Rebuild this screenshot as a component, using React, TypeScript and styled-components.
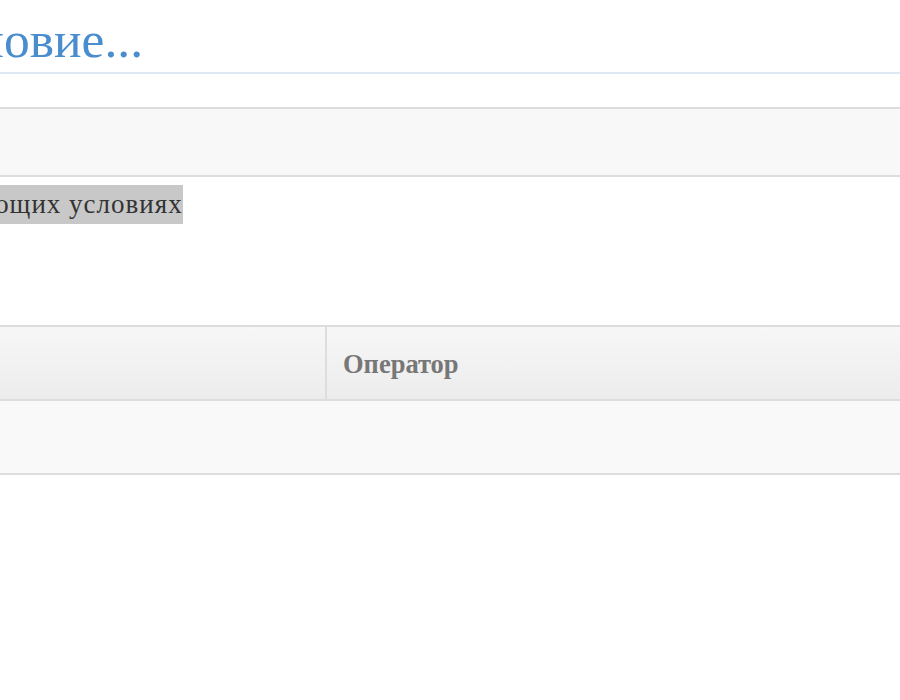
import React from "react";
import styled, { createGlobalStyle } from "styled-components";

const Global = createGlobalStyle`
  html, body {
    margin: 0;
    padding: 0;
    background: #ffffff;
    overflow: hidden;
  }
  body {
    font-family: "Liberation Serif", "Times New Roman", serif;
    color: #333333;
  }
`;

const Page = styled.div`
  width: 1500px;
  margin-left: -340px;
  padding-top: 12px;
`;

const Heading = styled.h1`
  margin: 0;
  padding: 2px 0 6px 49px;
  font-size: 51.5px;
  font-weight: normal;
  line-height: 52px;
  color: #4a8dce;
  border-bottom: 2px solid #dce8f3;
`;

const Panel = styled.div`
  margin-top: 33px;
  height: 66px;
  background: #f8f8f8;
  border-top: 2px solid #dddddd;
  border-bottom: 2px solid #dddddd;
`;

const Intro = styled.div`
  margin-top: 8px;
  padding-left: 59px;
`;

const Marked = styled.span`
  display: inline-block;
  background: #c8c8c8;
  font-size: 27px;
  line-height: 39px;
  letter-spacing: 1px;
  color: #333333;
`;

const Grid = styled.div`
  margin-top: 101px;
`;

const HeadRow = styled.div`
  display: grid;
  grid-template-columns: 665px 1fr;
  height: 72px;
  background: linear-gradient(#f7f7f7, #ececec);
  border-top: 2px solid #dddddd;
  border-bottom: 2px solid #dddddd;
`;

const HeadCell = styled.div`
  display: flex;
  align-items: center;
  padding: 3px 16px 0;
  font-size: 26.5px;
  font-weight: bold;
  color: #777777;
  & + & {
    border-left: 2px solid #dddddd;
  }
`;

const BodyRow = styled.div`
  height: 72px;
  background: #f9f9f9;
  border-bottom: 2px solid #dddddd;
`;

export default function App() {
  return (
    <>
      <Global />
      <Page>
        <Heading>Добавить условие...</Heading>
        <Panel />
        <Intro>
          <Marked>Выполнить при следующих условиях</Marked>
        </Intro>
        <Grid>
          <HeadRow>
            <HeadCell>Поле</HeadCell>
            <HeadCell>Оператор</HeadCell>
          </HeadRow>
          <BodyRow />
        </Grid>
      </Page>
    </>
  );
}
